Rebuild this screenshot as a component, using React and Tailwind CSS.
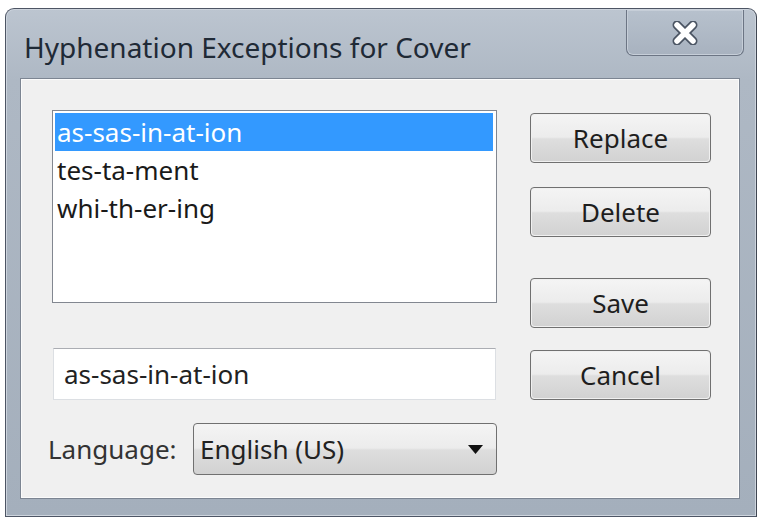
import React from 'react';

const font = { fontFamily: '"Noto Sans", "Open Sans", "Liberation Sans", sans-serif' };

function WinButton({ children, className = '' }) {
  return (
    <div
      className={`h-[50px] w-[181px] rounded-[4px] border border-[#707070] p-px ${className}`}
    >
      <div className="flex h-full w-full items-center justify-center rounded-[3px] bg-[linear-gradient(#f4f4f4_0%,#ececec_48%,#dedede_52%,#d2d2d2_100%)] text-[26px] text-[#1e1e1e]">
        {children}
      </div>
    </div>
  );
}

function CloseGlyph() {
  return (
    <svg width="28" height="24" viewBox="0 0 28 24">
      <path d="M6 4 L22 20 M22 4 L6 20" stroke="#4b5563" strokeWidth="9" strokeLinecap="round" />
      <path d="M6 4 L22 20 M22 4 L6 20" stroke="#ffffff" strokeWidth="5.5" strokeLinecap="round" />
    </svg>
  );
}

export default function App() {
  const words = ['as-sas-in-at-ion', 'tes-ta-ment', 'whi-th-er-ing'];

  return (
    <div className="h-[520px] w-[760px] overflow-hidden bg-white pl-[5px] pt-[8px]" style={font}>
      <div className="flex h-[509px] w-[752px] flex-col rounded-t-[9px] border border-[#4d5564] border-r-[#3f4652] bg-[linear-gradient(#bcc5d0_0%,#aeb8c4_14%,#a4afbc_100%)] shadow-[inset_0_0_0_1px_#cdd4dd]">
        {/* title bar */}
        <div className="flex h-[69px] items-start justify-between">
          <div className="pl-[18px] pt-[20px] text-[28px] leading-[36px] text-[#1f2a36]">
            Hyphenation Exceptions for Cover
          </div>
          <div className="mr-[12px] mt-px flex h-[46px] w-[118px] items-center justify-center rounded-b-[7px] border border-t-0 border-[#6c7584] bg-[linear-gradient(#b7c1cd,#a8b2bf)] shadow-[inset_0_0_0_1px_#c6ced8]">
            <CloseGlyph />
          </div>
        </div>

        {/* client area */}
        <div className="ml-[14px] mr-[16px] flex h-[421px] border border-[#7c8592] bg-[#f0f0f0] pl-[31px] pt-[31px] shadow-[inset_0_0_0_1px_#fbfbfb]">
          <div className="flex w-[445px] flex-col">
            <div className="h-[193px] border border-[#828790] bg-white p-[2px] pr-[3px]">
              {words.map((w, i) => (
                <div
                  key={w}
                  className={`flex h-[38px] items-center pl-[2px] text-[26px] ${
                    i === 0 ? 'bg-[#3399ff] text-white' : 'text-[#1a1a1a]'
                  }`}
                >
                  {w}
                </div>
              ))}
            </div>

            <div className="ml-px mt-[45px] flex h-[52px] w-[443px] items-center border border-[#dcdfe3] border-t-[#abadb3] bg-white pl-[10px] text-[26px] text-[#222]">
              as-sas-in-at-ion
            </div>

            <div className="-ml-[4px] mt-[23px] flex items-center">
              <span className="w-[145px] text-[26px] text-[#333]">Language:</span>
              <div className="flex h-[52px] w-[304px] items-center justify-between rounded-[4px] border border-[#707070] bg-[linear-gradient(#f4f4f4_0%,#ececec_48%,#dedede_52%,#d2d2d2_100%)] pl-[6px] pr-[13px] text-[26px] text-[#222]">
                <span>English (US)</span>
                <svg width="15" height="9" viewBox="0 0 15 9">
                  <path d="M0 0 H15 L7.5 9 Z" fill="#111" />
                </svg>
              </div>
            </div>
          </div>

          <div className="ml-[33px] mt-[3px] flex flex-col">
            <WinButton>Replace</WinButton>
            <WinButton className="mt-[24px]">Delete</WinButton>
            <WinButton className="mt-[41px]">Save</WinButton>
            <WinButton className="mt-[22px]">Cancel</WinButton>
          </div>
        </div>
      </div>
    </div>
  );
}
